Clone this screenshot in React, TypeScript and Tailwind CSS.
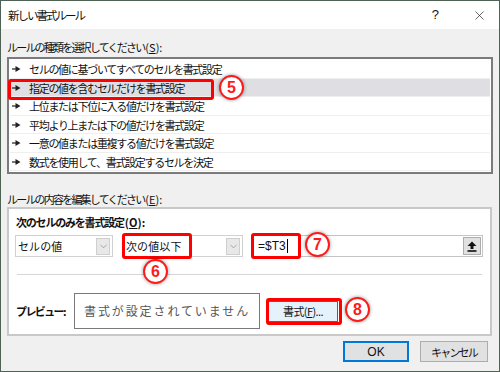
import { ChevronDown, X } from "lucide-react";

const RULES = [
    { text: "セルの値に基づいてすべてのセルを書式設定", h: "h-[19px]" },
    { text: "指定の値を含むセルだけを書式設定", h: "h-[18px]", selected: true },
    { text: "上位または下位に入る値だけを書式設定", h: "h-[19px]" },
    { text: "平均より上または下の値だけを書式設定", h: "h-[18px]" },
    { text: "一意の値または重複する値だけを書式設定", h: "h-[19px]" },
    { text: "数式を使用して、書式設定するセルを決定", h: "h-[18px]" },
];

function Bullet() {
    return (
        <svg width="9" height="6" viewBox="0 0 9 6" className="shrink-0">
            <rect x="0" y="2.4" width="4" height="1.2" fill="#222" />
            <path d="M3.5 0 L8.5 3 L3.5 6 Z" fill="#222" />
        </svg>
    );
}

function Badge({ n, className }: { n: string; className: string }) {
    return (
        <div
            className={`absolute w-[25px] h-[25px] rounded-full bg-white border-2 border-[#ff1a1a] shadow-[0_0_3px_1px_rgba(0,0,0,0.25)] flex items-center justify-center text-[#ff1a1a] font-bold text-[16px] leading-none font-['Liberation_Sans',sans-serif] ${className}`}
        >
            {n}
        </div>
    );
}

function Dropdown({ label, w }: { label: string; w: string }) {
    return (
        <div className={`${w} h-[22px] bg-white border border-[#d2d2d2] flex items-center justify-between pl-[2px] pr-[2px]`}>
            <span className="tracking-[0.1px]">{label}</span>
            <div className="w-[14px] h-[17px] bg-[#e8e8e8] border border-[#cfcfcf] flex items-center justify-center">
                <ChevronDown size={11} strokeWidth={1.3} color="#7a7a7a" />
            </div>
        </div>
    );
}

export default function App() {
    return (
        <div className="relative w-[500px] h-[372px] bg-[#f0f0f0] border border-[#4e6356] text-[11px] text-[#111] leading-[16px] overflow-hidden font-['Noto_Sans_CJK_JP',sans-serif]">
            {/* Title bar */}
            <div className="h-[28px] bg-white flex items-center pl-[7px] pr-[12px]">
                <span className="flex-1 text-[11.5px] tracking-[-2px]">新しい書式ルール</span>
                <span className="mr-[33px] text-[13px] font-['Liberation_Sans',sans-serif]">?</span>
                <X size={15} strokeWidth={1.1} color="#222" />
            </div>

            <div className="px-[6px]">
                <div className="pt-[10px] h-[26px]">
                    <span className="tracking-[-1.8px]">ルールの種類を選択してください</span>
                    <span className="ml-[1px]">(<u>S</u>):</span>
                </div>

                {/* Rule type list */}
                <div className="mt-[2px] bg-white border-2 border-[#7b7b7b] p-[1px] flex flex-col">
                    {RULES.map((r) => (
                        <div
                            key={r.text}
                            className={`${r.h} flex items-center gap-[8px] pl-[2px] border-b border-[#efefef] ${r.selected ? "bg-[#dfdfe3]" : ""}`}
                        >
                            <Bullet />
                            <span className="tracking-[-1.3px] whitespace-nowrap">{r.text}</span>
                        </div>
                    ))}
                </div>

                <div className="mt-[17px] h-[16px]">
                    <span className="tracking-[-1.8px]">ルールの内容を編集してください</span>
                    <span className="ml-[1px]">(<u>E</u>):</span>
                </div>

                {/* Rule description */}
                <div className="mr-[1px] bg-white border-2 border-[#c8c8c8] pt-[5px] pb-[5px] px-[6px]">
                    <div className="pl-[1px] font-bold">
                        <span className="tracking-[-1.2px]">次のセルのみを書式設定</span>
                        <span className="ml-[1px]">(<u>O</u>):</span>
                    </div>
                    <div className="mt-[5px] flex items-center">
                        <Dropdown label="セルの値" w="w-[98px]" />
                        <div className="ml-[10px]">
                            <Dropdown label="次の値以下" w="w-[120px]" />
                        </div>
                        <div className="ml-[9px] w-[231px] h-[22px] bg-white border border-[#c4c4c4] flex items-center justify-between pl-[5px] pr-[1px]">
                            <span className="flex items-center text-[12px] font-['Liberation_Sans',sans-serif]">
                                =$T3<span className="ml-[1px] w-[1px] h-[14px] bg-black" />
                            </span>
                            <div className="w-[18px] h-[18px] bg-[#e1e1e1] border border-[#adadad] flex items-center justify-center">
                                <svg width="10" height="11" viewBox="0 0 10 11">
                                    <path d="M5 0.5 L9.5 5 L6.5 5 L6.5 8 L3.5 8 L3.5 5 L0.5 5 Z" fill="#111" />
                                    <rect x="0.5" y="9.2" width="9" height="1.6" fill="#111" />
                                </svg>
                            </div>
                        </div>
                    </div>

                    <div className="mt-[17px] mx-[2px] h-[1px] bg-[#d6d6d6]" />

                    <div className="mt-[18px] flex items-center">
                        <span className="pl-[1px] w-[59px] font-bold whitespace-nowrap tracking-[-1.6px]">プレビュー:</span>
                        <div className="w-[186px] h-[36px] border border-[#7a7a7a] flex items-center pl-[9px] text-[12px] text-[#555] tracking-[1.9px] whitespace-nowrap">
                            書式が設定されていません
                        </div>
                        <div className="ml-[8px] w-[70px] h-[21px] bg-[#e5f1fb] border border-[#0078d7] flex items-center justify-center tracking-[-0.6px]">
                            書式(<u>F</u>)...
                        </div>
                    </div>
                </div>

                {/* OK / Cancel */}
                <div className="mt-[5px] flex justify-end gap-[11px] pr-[5px]">
                    <div className="w-[66px] h-[21px] bg-[#e1e1e1] border-2 border-[#0078d7] flex items-center justify-center text-[12px] font-['Liberation_Sans',sans-serif]">
                        OK
                    </div>
                    <div className="w-[68px] h-[21px] bg-[#e1e1e1] border border-[#adadad] flex items-center justify-center tracking-[-1.8px]">
                        キャンセル
                    </div>
                </div>
            </div>

            {/* Annotations */}
            <div className="absolute left-[7px] top-[78px] w-[206px] h-[21px] rounded-[3px] border-[3px] border-[#ff0000] pointer-events-none" />
            <Badge n="5" className="left-[218px] top-[74px]" />
            <div className="absolute left-[121px] top-[232px] w-[70px] h-[26px] rounded-[3px] border-[3px] border-[#ff0000] pointer-events-none" />
            <Badge n="6" className="left-[142px] top-[258px]" />
            <div className="absolute left-[250px] top-[232px] w-[50px] h-[26px] rounded-[3px] border-[3px] border-[#ff0000] pointer-events-none" />
            <Badge n="7" className="left-[304px] top-[231px]" />
            <div className="absolute left-[265px] top-[297px] w-[76px] h-[27px] rounded-[3px] border-[3px] border-[#ff0000] pointer-events-none" />
            <Badge n="8" className="left-[344px] top-[296px]" />
        </div>
    );
}
